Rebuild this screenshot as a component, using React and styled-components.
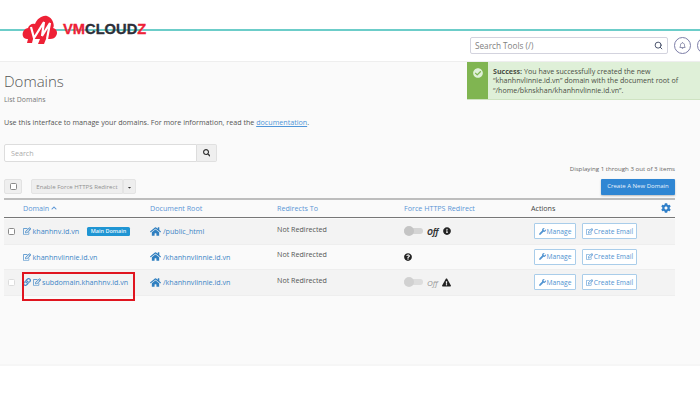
import React from "react";
import styled, { createGlobalStyle } from "styled-components";
import { Search as ThinSearch } from "lucide-react";
import {
  FaCaretDown,
  FaCheckCircle,
  FaChevronUp,
  FaCog,
  FaExclamationTriangle,
  FaHome,
  FaInfoCircle,
  FaLink,
  FaQuestionCircle,
  FaRegBell,
  FaRegEdit,
  FaSearch,
  FaWrench,
} from "react-icons/fa";

const Global = createGlobalStyle`
  html, body { margin: 0; padding: 0; background: #fff; }
  body { width: 700px; height: 400px; overflow: hidden; font-family: "Open Sans", "Liberation Sans", sans-serif; color: #333; }
  * { box-sizing: border-box; }
`;

const Page = styled.div`
  position: relative;
  width: 700px;
  height: 400px;
  overflow: hidden;
  background: #fff;
`;

const TopBar = styled.header`
  position: relative;
  height: 62px;
  padding: 15px 0 0 21px;
  background: #fff;
  border-bottom: 1px solid #eeeeee;
  display: flex;
  justify-content: space-between;
`;

const TealLine = styled.div`
  position: absolute;
  left: 0;
  right: 0;
  top: 29px;
  height: 1.5px;
  background: #6ccdc9;
`;

const Logo = styled.div`
  position: relative;
  display: flex;
  align-items: center;
  gap: 5px;
  height: 29px;
`;

const LogoText = styled.span`
  font-family: "Liberation Sans", Arial, sans-serif;
  font-weight: 700;
  font-size: 14.7px;
  line-height: 1;
  color: #ee2136;
  -webkit-text-stroke: 0.3px currentColor;
  b { color: #2d2f38; font-weight: 700; }
`;

const TopTools = styled.div`
  position: relative;
  display: flex;
  gap: 6px;
  margin-top: 22px;
  margin-right: -14px;
  height: 18px;
`;

const ToolSearch = styled.div`
  width: 198px;
  height: 17px;
  border: 1px solid #d3d3de;
  border-radius: 2px;
  background: #fff;
  display: flex;
  align-items: center;
  justify-content: space-between;
  padding: 0 4px;
  font-size: 8.2px;
  color: #808080;
  svg { color: #47506a; }
`;

const RoundButton = styled.div`
  width: 17px;
  height: 17px;
  border: 1px solid #7d7ea8;
  border-radius: 50%;
  background: #fff;
  display: flex;
  align-items: center;
  justify-content: center;
  color: #6e7095;
  font-size: 7px;
`;

const Main = styled.main`
  position: relative;
  height: 304px;
  background: #fafafa;
  border-bottom: 2px solid #f6f6f6;
  padding: 8px 25px 0 4px;
`;

const Alert = styled.div`
  position: absolute;
  top: 0;
  right: 0;
  width: 233px;
  height: 38px;
  display: flex;
  background: #dff0d8;
  border-bottom: 1px solid #cfe3c2;
`;

const AlertIcon = styled.div`
  width: 21px;
  background: #80b551;
  color: #dff0d8;
  font-size: 10px;
  padding: 5px 0 0 6px;
`;

const AlertText = styled.div`
  padding: 5px 0 0 5px;
  font-size: 7.1px;
  line-height: 9.4px;
  color: #4a4f45;
  white-space: nowrap;
  b { font-weight: 700; }
`;

const Title = styled.h1`
  margin: 0;
  font-size: 15px;
  line-height: 22px;
  font-weight: 300;
  color: #555;
`;

const Sub = styled.div`
  font-size: 6.9px;
  line-height: 10px;
  margin-top: 3px;
  color: #777;
`;

const Intro = styled.p`
  margin: 12px 0 0;
  font-size: 7.15px;
  line-height: 11px;
  color: #555;
  a { color: #4f95d8; text-decoration: underline; }
`;

const SearchGroup = styled.div`
  display: flex;
  width: 213px;
  height: 18px;
  margin-top: 16px;
`;

const SearchInput = styled.div`
  flex: 1;
  background: #fff;
  border: 1px solid #dddddd;
  border-radius: 2px 0 0 2px;
  padding-left: 6px;
  font-size: 7.15px;
  line-height: 16px;
  color: #aaa;
`;

const SearchButton = styled.div`
  width: 20px;
  background: #efefef;
  border: 1px solid #e0e0e0;
  border-left: 0;
  border-radius: 0 2px 2px 0;
  display: flex;
  align-items: center;
  justify-content: center;
  font-size: 7.5px;
  color: #333;
`;

const Counter = styled.div`
  text-align: right;
  font-size: 6.15px;
  line-height: 10px;
  color: #666;
  margin-top: 2px;
`;

const Toolbar = styled.div`
  display: flex;
  align-items: flex-start;
  height: 21px;
  margin-top: 5px;
`;

const SelectAll = styled.div`
  width: 18px;
  height: 15px;
  background: #efefef;
  border: 1px solid #e2e2e2;
  border-radius: 2px;
  margin-right: 9px;
  display: flex;
  justify-content: center;
  padding-top: 3px;
`;

const Check = styled.span`
  display: block;
  width: 7px;
  height: 7px;
  background: #fff;
  border: 1px solid ${(p) => (p.$muted ? "#dcdcdc" : "#8a8a8a")};
  border-radius: 1.5px;
`;

const BulkButton = styled.div`
  height: 15px;
  width: ${(p) => p.$w}px;
  background: #eeeeee;
  border: 1px solid #e4e4e4;
  border-radius: ${(p) => p.$radius};
  font-size: 6.1px;
  line-height: 13px;
  color: #929292;
  white-space: nowrap;
  text-align: center;
  svg { color: #333; font-size: 5px; vertical-align: -1px; }
`;

const CreateButton = styled.div`
  margin-left: auto;
  height: 15.5px;
  width: 74px;
  background: #2f86d3;
  border-radius: 1px;
  box-shadow: 0 1px 2px rgba(0, 0, 0, 0.25);
  font-size: 6px;
  line-height: 15px;
  color: #eaf3fb;
  text-align: center;
  white-space: nowrap;
`;

const Table = styled.div`
  width: 671px;
  margin-top: -2px;
`;

const cols = "19px 127px 127px 127px 127px 1fr";

const HeadRow = styled.div`
  display: grid;
  grid-template-columns: ${cols};
  align-items: center;
  height: 20px;
  padding-bottom: 1px;
  border-top: 2px solid #bdbdbd;
  border-bottom: 1.5px solid #777;
  font-size: 7.15px;
`;

const HeadCell = styled.div`
  color: ${(p) => (p.$plain ? "#444" : "#5a96d6")};
  display: flex;
  align-items: center;
  gap: 2px;
  grid-column: ${(p) => p.$col || "auto"};
  svg { font-size: 6px; }
`;

const ActionHead = styled(HeadCell)`
  justify-content: space-between;
  padding-right: 4px;
  svg { font-size: 10px; color: #2f7fc9; }
`;

const Row = styled.div`
  position: relative;
  display: grid;
  grid-template-columns: ${cols};
  align-items: center;
  height: 25.6px;
  margin-top: ${(p) => p.$mt || 0}px;
  background: ${(p) => (p.$alt ? "#f3f3f3" : "#fafafa")};
  border-bottom: 1px solid #eeeeee;
  font-size: 7.15px;
`;

const CheckCell = styled.div`
  padding-left: 4px;
`;

const DomainCell = styled.div`
  display: flex;
  align-items: center;
  gap: 1.5px;
  color: #3d85c6;
  white-space: nowrap;
  svg { font-size: 8px; flex: none; }
`;

const Badge = styled.span`
  margin-left: 6px;
  background: #1f95d3;
  color: #eaf6fc;
  border-radius: 1.5px;
  font-size: 5.5px;
  font-weight: 600;
  line-height: 9px;
  padding: 0 4px;
`;

const RootCell = styled.div`
  display: flex;
  align-items: center;
  gap: 2px;
  color: #3d85c6;
  white-space: nowrap;
  svg { font-size: 11px; color: #2f7fc0; }
`;

const RedirectCell = styled.div`
  color: #555;
  margin-top: -5px;
`;

const ForceCell = styled.div`
  display: flex;
  align-items: center;
  gap: 4px;
  font-style: italic;
  font-size: 8px;
  color: ${(p) => (p.$muted ? "#999" : "#333")};
  svg { font-size: ${(p) => (p.$muted ? 9 : 8)}px; color: #222; }
  em { font-weight: ${(p) => (p.$muted ? 400 : 700)}; }
`;

const Toggle = styled.span`
  position: relative;
  display: block;
  width: 19px;
  height: 6px;
  background: #d4d4d4;
  border-radius: 3px;
  opacity: ${(p) => (p.$muted ? 0.7 : 1)};
  &::before {
    content: "";
    position: absolute;
    left: 0;
    top: -2px;
    width: 10px;
    height: 10px;
    border-radius: 50%;
    background: #c4c4c4;
  }
`;

const Actions = styled.div`
  display: flex;
  gap: 6px;
  margin-left: 3px;
`;

const ActionButton = styled.div`
  height: 16px;
  width: ${(p) => p.$w}px;
  display: flex;
  align-items: center;
  justify-content: center;
  gap: 1px;
  background: #fff;
  border: 1px solid #a9cdea;
  border-radius: 1px;
  font-size: 6.7px;
  color: #4f92d0;
  white-space: nowrap;
  svg { font-size: 7px; }
`;

const Highlight = styled.div`
  position: absolute;
  left: 18px;
  top: 2px;
  width: 113px;
  height: 29px;
  border: 2px solid #e0151f;
  pointer-events: none;
`;

const CloudLogo = () => (
  <svg width="37" height="29" viewBox="0 0 37 29" aria-hidden="true">
    <path
      d="M6 24C0 24 0 14 7 13c1-3 4-5 7-4 2-5 7-9 12-8 3 1 5 3 6 6 1 3 1 5 0 6 4 1 5 5 3 8-1 2-3 3-6 3l-4 0-2 5-6 0 2-5-7 0-1 4-5 0 1-4z"
      fill="#ee2136"
    />
    <polyline
      points="10,12 13,23 23,7 21,21 29,8 26,24"
      fill="none"
      stroke="#fff"
      strokeWidth="2.2"
      strokeLinejoin="miter"
    />
  </svg>
);

const Manage = () => (
  <ActionButton $w={42}>
    <FaWrench />
    Manage
  </ActionButton>
);

const CreateEmail = () => (
  <ActionButton $w={55}>
    <FaRegEdit />
    Create Email
  </ActionButton>
);

const Root = ({ path }) => (
  <RootCell>
    <FaHome />
    {path}
  </RootCell>
);

export default function App() {
  return (
    <Page>
      <Global />
      <TopBar>
        <TealLine />
        <Logo>
          <CloudLogo />
          <LogoText>
            VM<b>CLOUD</b>Z
          </LogoText>
        </Logo>
        <TopTools>
          <ToolSearch>
            Search Tools (/)
            <ThinSearch size={9} strokeWidth={2.6} />
          </ToolSearch>
          <RoundButton>
            <FaRegBell />
          </RoundButton>
          <RoundButton />
        </TopTools>
      </TopBar>
      <Main>
        <Alert>
          <AlertIcon>
            <FaCheckCircle />
          </AlertIcon>
          <AlertText>
            <b>Success:</b> You have successfully created the new
            <br />
            “khanhnvlinnie.id.vn” domain with the document root of
            <br />
            “/home/bknskhan/khanhnvlinnie.id.vn”.
          </AlertText>
        </Alert>
        <Title>Domains</Title>
        <Sub>List Domains</Sub>
        <Intro>
          Use this interface to manage your domains. For more information, read the <a>documentation</a>.
        </Intro>
        <SearchGroup>
          <SearchInput>Search</SearchInput>
          <SearchButton>
            <FaSearch />
          </SearchButton>
        </SearchGroup>
        <Counter>Displaying 1 through 3 out of 3 items</Counter>
        <Toolbar>
          <SelectAll>
            <Check />
          </SelectAll>
          <BulkButton $w={92} $radius="2px 0 0 2px">
            Enable Force HTTPS Redirect
          </BulkButton>
          <BulkButton $w={13} $radius="0 2px 2px 0">
            <FaCaretDown />
          </BulkButton>
          <CreateButton>Create A New Domain</CreateButton>
        </Toolbar>
        <Table>
          <HeadRow>
            <HeadCell $col="2">
              Domain <FaChevronUp />
            </HeadCell>
            <HeadCell>Document Root</HeadCell>
            <HeadCell>Redirects To</HeadCell>
            <HeadCell>Force HTTPS Redirect</HeadCell>
            <ActionHead $plain>
              Actions
              <FaCog />
            </ActionHead>
          </HeadRow>
          <Row $alt $mt={1}>
            <CheckCell>
              <Check />
            </CheckCell>
            <DomainCell>
              <FaRegEdit />
              khanhnv.id.vn
              <Badge>Main Domain</Badge>
            </DomainCell>
            <Root path="/public_html" />
            <RedirectCell>Not Redirected</RedirectCell>
            <ForceCell>
              <Toggle />
              <em>Off</em>
              <FaInfoCircle />
            </ForceCell>
            <Actions>
              <Manage />
              <CreateEmail />
            </Actions>
          </Row>
          <Row>
            <CheckCell />
            <DomainCell>
              <FaRegEdit />
              khanhnvlinnie.id.vn
            </DomainCell>
            <Root path="/khanhnvlinnie.id.vn" />
            <RedirectCell>Not Redirected</RedirectCell>
            <ForceCell>
              <FaQuestionCircle />
            </ForceCell>
            <Actions>
              <Manage />
              <CreateEmail />
            </Actions>
          </Row>
          <Row $alt>
            <CheckCell>
              <Check $muted />
            </CheckCell>
            <DomainCell>
              <FaLink />
              <FaRegEdit />
              subdomain.khanhnv.id.vn
            </DomainCell>
            <Root path="/khanhnvlinnie.id.vn" />
            <RedirectCell>Not Redirected</RedirectCell>
            <ForceCell $muted>
              <Toggle $muted />
              <em>Off</em>
              <FaExclamationTriangle />
            </ForceCell>
            <Actions>
              <Manage />
              <CreateEmail />
            </Actions>
            <Highlight />
          </Row>
        </Table>
      </Main>
    </Page>
  );
}
